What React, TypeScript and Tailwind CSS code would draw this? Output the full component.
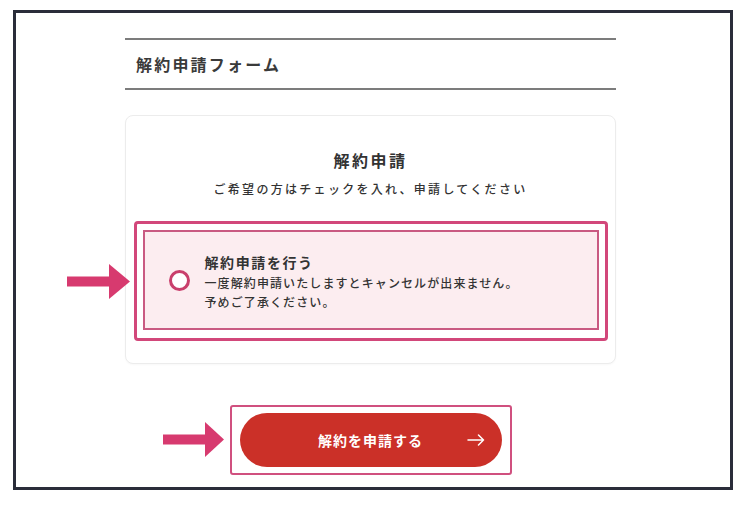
import React from "react";

const font = { fontFamily: '"Noto Sans CJK JP", "Noto Sans", sans-serif' };

function Arrow({ w }: { w: number }) {
  return (
    <svg width={w} height={35} viewBox={`0 0 ${w} 35`}>
      <rect x={0} y={12.5} width={44} height={10} fill="#d73a6f" />
      <polygon points={`42,0 ${w},17.5 42,35`} fill="#d73a6f" />
    </svg>
  );
}

export default function App() {
  return (
    <div
      className="relative w-[754px] h-[506px] bg-white overflow-hidden"
      style={font}
    >
      <div className="ml-[13px] mt-[10px] w-[720px] h-[480px] border-[3px] border-[#2a2d3a] bg-white">
        <div className="ml-[109px] w-[491px] pt-[25px] text-[#333]">
          <div className="h-[52px] border-y-2 border-[#7c7c7c] flex items-center pl-[11px]">
            <span className="text-[16px] font-semibold tracking-[2.2px] leading-none text-[#3a3a3a]">
              解約申請フォーム
            </span>
          </div>

          <div className="mt-[25px] h-[249px] border border-[#ececec] rounded-[8px] bg-white shadow-[0_1px_2px_rgba(0,0,0,0.03)] pt-[33px] flex flex-col items-center">
            <div className="text-[16px] font-bold tracking-[2.5px] leading-[22px] text-[#333]">
              解約申請
            </div>
            <div className="mt-[9px] text-[12px] font-medium tracking-[2.3px] leading-[18px] text-[#333]">
              ご希望の方はチェックを入れ、申請してください
            </div>

            <div className="mt-[23px] w-[474px] border-[3px] border-[#d2477a] rounded-[4px] pt-[6px] pb-[8px] px-[6px]">
              <div className="h-[100px] border-2 border-[#c95a82] bg-[#fcedf0] flex items-center pl-[24px] gap-[15px]">
                <div className="w-[21px] h-[21px] rounded-full border-[3px] border-[#c93f6c] bg-white shrink-0" />
                <div className="pt-[3px]">
                  <div className="text-[14px] font-bold tracking-[1.6px] leading-[20px] text-[#333]">
                    解約申請を行う
                  </div>
                  <div className="mt-[1.5px] text-[12px] font-medium tracking-[1.1px] leading-[19px] text-[#333]">
                    一度解約申請いたしますとキャンセルが出来ません。
                  </div>
                  <div className="text-[12px] font-medium tracking-[1.1px] leading-[19px] text-[#333]">
                    予めご了承ください。
                  </div>
                </div>
              </div>
            </div>
          </div>

          <div className="mt-[41px] flex justify-center">
            <div className="border-2 border-[#d0507f] rounded-[3px] py-[6px] px-[8px]">
              <div className="relative w-[262px] h-[54px] rounded-full bg-[#cb3028] flex items-center justify-center">
                <span className="text-[14px] font-bold tracking-[1px] text-white leading-none">
                  解約を申請する
                </span>
                <svg
                  className="absolute right-[17px] top-[21px]"
                  width="18"
                  height="12"
                  viewBox="0 0 18 12"
                  fill="none"
                  stroke="white"
                  strokeWidth="1.5"
                  strokeLinecap="round"
                  strokeLinejoin="round"
                >
                  <path d="M1 6 H16.5 M11.5 1 L16.5 6 L11.5 11" />
                </svg>
              </div>
            </div>
          </div>
        </div>
      </div>

      <div className="absolute left-[67px] top-[264px]">
        <Arrow w={63} />
      </div>
      <div className="absolute left-[163px] top-[422px]">
        <Arrow w={61} />
      </div>
    </div>
  );
}
